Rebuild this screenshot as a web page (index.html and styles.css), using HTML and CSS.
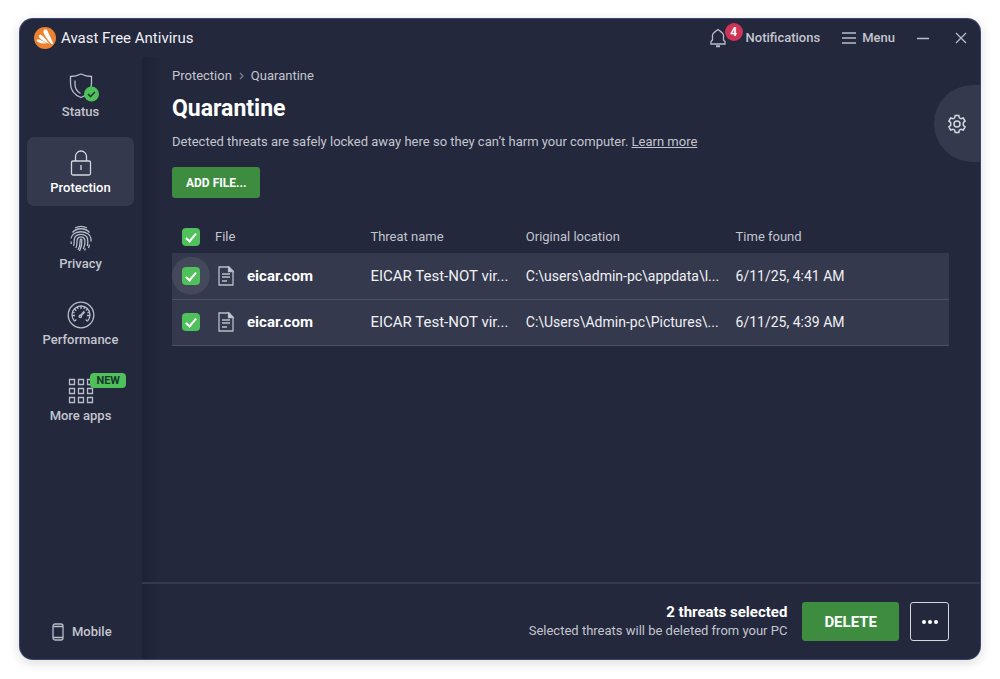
FILE: index.html
```html
<!DOCTYPE html>
<html lang="en">
<head>
    <meta charset="UTF-8">
    <meta name="viewport" content="width=device-width, initial-scale=1.0">
    <title>Avast Free Antivirus</title>
    <link rel="stylesheet" href="styles.css">
</head>
<body>
    <div class="window">
        <header class="titlebar">
            <div class="brand">
                <svg class="logo" viewBox="0 0 24 24">
                    <circle cx="12" cy="12" r="11" fill="#ec8130"/>
                    <path d="M10.800 4.200c.8-1.200 2.800-1.200 3.500.2l5.700 12.400c.5 1.200-.6 1.900-1.500 1.200-3.200-3.300-6.600-7.400-7.900-11.300-.3-.9-.2-1.800.2-2.500z" fill="#fff"/>
                    <path d="M6 9.600c.4-1 1.500-1.200 2.300-.6 2.900 2.300 5.400 5.200 8 8.800-3.800-1.200-7.900-3.500-10.100-6.300-.4-.6-.5-1.300-.2-1.900z" fill="#fff"/>
                    <path d="M3.600 14.300c.2-.8 1-1.200 1.800-1 2.900.8 5.300 2.300 8.100 4.300-3.200.1-6.800-.3-9-1.800-.6-.4-1-.9-.9-1.500z" fill="#fff"/>
                </svg>
                <span>Avast Free Antivirus</span>
            </div>
            <div class="title-actions">
                <button class="title-btn notif-btn">
                    <span class="bell">
                        <svg width="16" height="20" viewBox="0 0 16 20">
                            <path d="M1 16h14v-2.500l-1.500-1.500V7C13.200 5 11 3.800 8 1.500 5 3.800 2.800 5 2.500 7v5L1 13.500z"/>
                            <path d="M6 18.300h4" class="clapper"/>
                        </svg>
                        <span class="count">4</span>
                    </span>
                    Notifications
                </button>
                <button class="title-btn menu-btn">
                    <svg width="14" height="12" viewBox="0 0 14 12"><path d="M0 1h14M0 6h14M0 11h14"/></svg>
                    Menu
                </button>
                <button class="title-btn" aria-label="Minimize">
                    <svg width="12" height="12" viewBox="0 0 12 12"><path d="M0 6.500h12"/></svg>
                </button>
                <button class="title-btn" aria-label="Close">
                    <svg width="12" height="12" viewBox="0 0 12 12"><path d="M1 1l10 10M11 1L1 11"/></svg>
                </button>
            </div>
        </header>

        <div class="body">
            <nav class="sidebar">
                <a href="#" class="nav-item">
                    <svg width="34" height="30" viewBox="0 0 34 30">
                        <path d="M6.500 4.500C10 4.500 14 3.500 17 2c3 1.500 7 2.500 10.500 2.500v7c0 7-4 11.500-10.500 14C10.500 23 6.500 18.500 6.500 11.500z"/>
                        <path d="M11 8.500v4c0 4 2 7 5.500 9"/>
                        <circle cx="27.500" cy="22" r="7.500" class="ok"/>
                        <path d="M24 22l2.500 2.500 4.500-4.500" class="ok-tick"/>
                    </svg>
                    Status
                </a>
                <a href="#" class="nav-item active">
                    <svg width="34" height="30" viewBox="0 0 34 30">
                        <rect x="7.500" y="13" width="19" height="14" rx="1.500"/>
                        <path d="M11.500 13V8.500a5.500 5.500 0 0 1 11 0V13M17 17v5"/>
                    </svg>
                    Protection
                </a>
                <a href="#" class="nav-item">
                    <svg width="34" height="30" viewBox="0 0 34 30">
                        <path d="M11 4c3.500-2 8.500-2 12 0M8.500 8.500c4-5 13-5 17 0M7 14.500c1-9 19-9 20 0v3M7.200 17.500v2.500M9.500 22c1.300-2.500.2-5 1-7.500 1.500-5.500 11.500-5.500 13 0 .6 2.500.4 5-.2 7.500M11.800 24c1.800-3 .8-6 1.500-8.500 1-3.500 6.400-3.500 7.400 0 .7 3-.2 6.500-1.400 9.500M14 26c2.500-4 2-7.500 2.200-10 .1-1 1.500-1 1.600 0 .4 4-.8 8-2.300 11M25.500 20.500l-1 3.500M21.500 24.500l-1 2"/>
                    </svg>
                    Privacy
                </a>
                <a href="#" class="nav-item">
                    <svg width="34" height="30" viewBox="0 0 34 30">
                        <circle cx="17" cy="15" r="12.800"/>
                        <path d="M10.500 21.200a9 9 0 1 1 13 0"/>
                        <path d="M10.500 21.200l1.800-1.600M23.500 21.200l-1.800-1.600M8 15.500h3M23 15.500h3M10.500 9l1.800 1.800M23.500 9l-1.500 1.500M17 6v3M13.300 7l.8 2M20.700 7l-.8 2M8.500 12l2 .8M25.500 12l-2 .8"/>
                        <path d="M16.500 16l4-4.500" class="needle"/>
                        <circle cx="16.300" cy="16.300" r="1.200"/>
                    </svg>
                    Performance
                </a>
                <a href="#" class="nav-item">
                    <span class="tag">NEW</span>
                    <svg width="34" height="30" viewBox="0 0 34 30">
                        <path d="M5.500 3.500h5v5h-5zM14.500 3.500h5v5h-5zM23.500 3.500h5v5h-5zM5.500 12.500h5v5h-5zM14.500 12.500h5v5h-5zM23.500 12.500h5v5h-5zM5.500 21.500h5v5h-5zM14.500 21.500h5v5h-5zM23.500 21.500h5v5h-5z"/>
                    </svg>
                    More apps
                </a>
                <a href="#" class="mobile">
                    <svg width="12" height="18" viewBox="0 0 12 18">
                        <rect x="1" y="1" width="10" height="16" rx="2"/>
                        <path d="M1 3.500h10M1 14.500h10"/>
                    </svg>
                    Mobile
                </a>
            </nav>

            <main class="main">
                <div class="content">
                    <div class="breadcrumb">
                        <a href="#">Protection</a>
                        <svg width="5" height="8" viewBox="0 0 5 8"><path d="M1 1l3 3-3 3"/></svg>
                        <span>Quarantine</span>
                    </div>
                    <h1>Quarantine</h1>
                    <p class="desc">Detected threats are safely locked away here so they can’t harm your computer. <a href="#">Learn more</a></p>
                    <button class="add-btn">ADD FILE...</button>

                    <table class="files">
                        <thead>
                            <tr>
                                <th class="col-check"><input type="checkbox" aria-label="Select all" checked></th>
                                <th class="col-file">File</th>
                                <th class="col-threat">Threat name</th>
                                <th class="col-location">Original location</th>
                                <th>Time found</th>
                            </tr>
                        </thead>
                        <tbody>
                            <tr>
                                <td class="col-check"><input type="checkbox" id="file1" class="hovered" checked></td>
                                <td>
                                    <label class="file-name" for="file1">
                                        <svg width="16" height="20" viewBox="0 0 16 20">
                                            <path d="M1 1h10l4 4v14H1z"/>
                                            <path d="M10.500 1v4.500H15z" class="fold"/>
                                            <path d="M4 8h8M4 11h8M4 15h5"/>
                                        </svg>
                                        eicar.com
                                    </label>
                                </td>
                                <td>EICAR Test-NOT vir...</td>
                                <td class="detail">C:\users\admin-pc\appdata\l...</td>
                                <td class="detail">6/11/25, 4:41 AM</td>
                            </tr>
                            <tr>
                                <td class="col-check"><input type="checkbox" id="file2" checked></td>
                                <td>
                                    <label class="file-name" for="file2">
                                        <svg width="16" height="20" viewBox="0 0 16 20">
                                            <path d="M1 1h10l4 4v14H1z"/>
                                            <path d="M10.500 1v4.500H15z" class="fold"/>
                                            <path d="M4 8h8M4 11h8M4 15h5"/>
                                        </svg>
                                        eicar.com
                                    </label>
                                </td>
                                <td>EICAR Test-NOT vir...</td>
                                <td class="detail">C:\Users\Admin-pc\Pictures\...</td>
                                <td class="detail">6/11/25, 4:39 AM</td>
                            </tr>
                        </tbody>
                    </table>
                </div>

                <footer class="footer">
                    <div class="summary">
                        <strong>2 threats selected</strong>
                        <span>Selected threats will be deleted from your PC</span>
                    </div>
                    <button class="delete-btn">DELETE</button>
                    <button class="more-btn" aria-label="More actions">
                        <svg width="16" height="4" viewBox="0 0 16 4"><circle cx="2" cy="2" r="2"/><circle cx="8" cy="2" r="2"/><circle cx="14" cy="2" r="2"/></svg>
                    </button>
                </footer>
            </main>
        </div>

        <button class="settings-btn" aria-label="Settings">
            <svg width="20" height="20" viewBox="0 0 20 20">
                <path d="M8.200 1.500h3.600l.5 2.300 1.700 1 2.300-.8 1.800 3.100-1.800 1.600v2.600l1.800 1.600-1.800 3.100-2.300-.8-1.700 1-.5 2.300H8.200l-.5-2.300-1.700-1-2.300.8-1.800-3.100 1.800-1.600V8.700L1.900 7.100 3.700 4l2.300.8 1.700-1z"/>
                <circle cx="10" cy="10" r="3"/>
            </svg>
        </button>
    </div>
</body>
</html>
```
FILE: styles.css
```css
* {
    margin: 0;
    padding: 0;
    box-sizing: border-box;
}
body {
    min-height: 100vh;
    display: flex;
    padding: 19px 20px 20px;
    background: #fff;
    color: #c3c5ce;
    font-family: Roboto, "Noto Sans", sans-serif;
    font-size: 13px;
    line-height: 16px;
}
a {
    color: inherit;
    text-decoration: none;
}
button {
    border: none;
    background: none;
    color: inherit;
    font: inherit;
    cursor: pointer;
}
svg {
    display: block;
    flex-shrink: 0;
    overflow: visible;
    fill: none;
    stroke: #b9bcc9;
    stroke-width: 1.3;
}
.window {
    position: relative;
    flex: 1;
    display: flex;
    flex-direction: column;
    background: #23283d;
    border-radius: 13px;
    overflow: hidden;
    box-shadow: 0 0 0 1px #3a4670, 0 3px 10px 3px rgba(0, 0, 0, 0.1);
}

/* title bar */
.titlebar {
    display: flex;
    align-items: center;
    justify-content: space-between;
    height: 38px;
    padding: 0 13px;
}
.brand {
    display: flex;
    align-items: center;
    gap: 4px;
    color: #f0f0f4;
    font-size: 15px;
}
.logo {
    width: 24px;
    height: 24px;
    stroke: none;
}
.title-actions {
    display: flex;
    align-items: center;
    gap: 22px;
}
.title-btn {
    display: flex;
    align-items: center;
    gap: 6px;
    font-weight: 500;
}
.title-btn + .title-btn + .title-btn + .title-btn {
    margin-left: 4px;
}
.bell {
    position: relative;
    margin-right: 14px;
}
.clapper {
    stroke-width: 2;
}
.count {
    position: absolute;
    top: -5px;
    left: 15px;
    width: 18px;
    height: 18px;
    border-radius: 50%;
    background: #ce3456;
    color: #fff;
    font-size: 12px;
    font-weight: 700;
    line-height: 18px;
    text-align: center;
}

.body {
    flex: 1;
    display: flex;
}

/* left navigation */
.sidebar {
    display: flex;
    flex-direction: column;
    gap: 7px;
    width: 122px;
    padding: 4px 8px 18px 7px;
}
.nav-item {
    position: relative;
    display: flex;
    flex-direction: column;
    align-items: center;
    gap: 2px;
    height: 69px;
    padding: 11px 0;
    border-radius: 7px;
    font-weight: 500;
}
.nav-item.active {
    background: #34394d;
    color: #fff;
}
.nav-item.active svg {
    stroke: #d5d7df;
}
.nav-item .ok {
    fill: #4fc05a;
    stroke: none;
}
.nav-item .ok-tick {
    stroke: #1e3a35;
    stroke-width: 1.6;
}
.needle {
    stroke-width: 2;
}
.tag {
    position: absolute;
    top: 8px;
    right: 8px;
    z-index: 1;
    padding: 0 6px;
    border-radius: 4px;
    background: #4fc05a;
    color: #17382c;
    font-size: 11px;
    font-weight: 700;
    line-height: 15px;
}
.mobile {
    display: flex;
    align-items: center;
    gap: 8px;
    margin-top: auto;
    padding-left: 25px;
    font-weight: 500;
}

/* quarantine page */
.main {
    flex: 1;
    min-width: 0;
    display: flex;
    flex-direction: column;
    background: linear-gradient(to right, #1d2236, #23283d 20px);
}
.content {
    flex: 1;
    padding: 11px 31px 24px 30px;
}
.breadcrumb {
    display: flex;
    align-items: center;
    gap: 7px;
}
.breadcrumb svg {
    stroke: #767b8d;
}
h1 {
    margin-top: 12px;
    color: #fff;
    font-size: 23px;
    line-height: 26px;
}
.desc {
    margin-top: 12px;
}
.desc a {
    text-decoration: underline;
}
.add-btn {
    height: 31px;
    margin-top: 17px;
    padding: 0 14px;
    border-radius: 3px;
    background: #3d8c40;
    color: #fff;
    font-size: 12px;
    font-weight: 700;
}
.files {
    width: 100%;
    margin-top: 22px;
    border-collapse: collapse;
    table-layout: fixed;
}
.files th {
    height: 33px;
    font-weight: 400;
    text-align: left;
}
.files td {
    height: 46px;
    border-bottom: 1px solid #4a5065;
    color: #f0f0f4;
    font-size: 15px;
    white-space: nowrap;
}
.files .detail {
    font-size: 14px;
}
.files tbody tr {
    background: #34394d;
}
.col-check {
    width: 43px;
    padding-left: 10px;
}
.col-file {
    width: 20%;
}
.col-threat {
    width: 20%;
}
.col-location {
    width: 27%;
}
.files input {
    appearance: none;
    display: block;
    position: relative;
    width: 18px;
    height: 18px;
    border-radius: 4px;
    background: #4fc05a;
}
.files input:checked::after {
    content: "";
    position: absolute;
    top: 3px;
    left: 6px;
    box-sizing: border-box;
    width: 6px;
    height: 11px;
    border: solid #fff;
    border-width: 0 2px 2px 0;
    transform: rotate(40deg);
}
.files input.hovered {
    box-shadow: 0 0 0 10px #43485b;
    clip-path: circle(19px);
}
.file-name {
    display: flex;
    align-items: center;
    gap: 13px;
    padding-left: 3px;
    color: #fff;
    font-weight: 700;
}
.fold {
    fill: #d5d7df;
}

/* bottom bar */
.footer {
    display: flex;
    align-items: center;
    justify-content: flex-end;
    height: 77px;
    padding: 0 31px 0 30px;
    border-top: 2px solid #34394d;
}
.summary {
    display: flex;
    flex-direction: column;
    gap: 3px;
    margin-right: 15px;
    text-align: right;
}
.summary strong {
    color: #fff;
    font-size: 15px;
}
.delete-btn {
    height: 39px;
    margin-right: 11px;
    padding: 0 22px;
    border-radius: 3px;
    background: #3d8c40;
    color: #fff;
    font-size: 15px;
    font-weight: 700;
}
.more-btn {
    display: flex;
    align-items: center;
    justify-content: center;
    width: 39px;
    height: 39px;
    border: 1px solid #d5d7df;
    border-radius: 3px;
}
.more-btn svg {
    fill: #fff;
    stroke: none;
}

/* settings handle on the right edge */
.settings-btn {
    position: absolute;
    top: 66px;
    right: 0;
    display: flex;
    align-items: center;
    width: 46px;
    height: 77px;
    padding-left: 13px;
    border-radius: 39px 0 0 39px;
    background: #34394d;
}
.settings-btn svg {
    stroke: #d5d7df;
    stroke-width: 1.5;
}
```
